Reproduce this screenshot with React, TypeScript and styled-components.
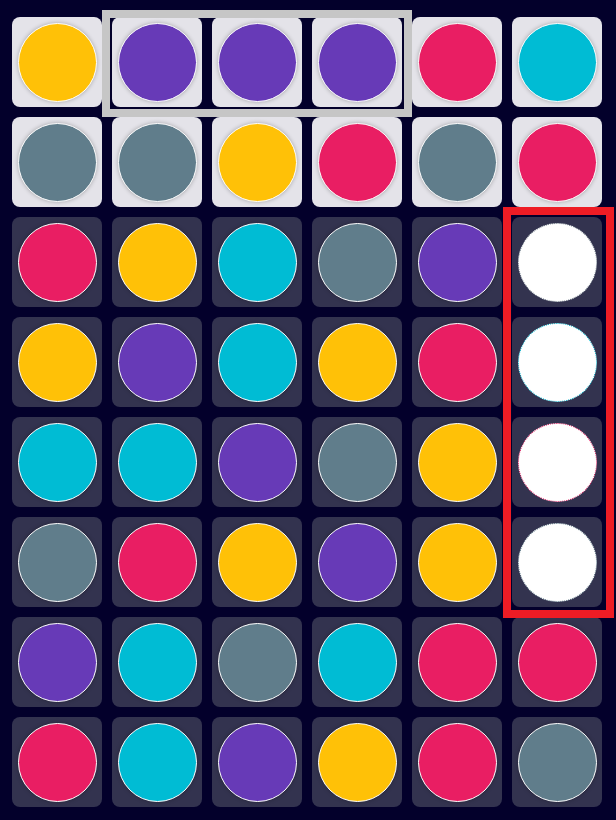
import React from "react";
import styled, { createGlobalStyle } from "styled-components";

const GlobalStyle = createGlobalStyle`
  html, body {
    margin: 0;
    padding: 0;
    background: #03002b;
    font-family: "Liberation Sans", Arial, sans-serif;
  }
`;

const Page = styled.div`
  width: 616px;
  height: 820px;
  padding: 17px 0 0 12px;
  box-sizing: border-box;
  background: #03002b;
  overflow: hidden;
`;

const Board = styled.div`
  position: relative;
  display: grid;
  grid-template-columns: repeat(6, 90px);
  grid-auto-rows: 90px;
  gap: 10px;
  width: max-content;
`;

const Cell = styled.div<{ $light: boolean }>`
  border-radius: 8px;
  background: ${(p) => (p.$light ? "#e4e3e9" : "#33334f")};
  display: flex;
  align-items: center;
  justify-content: center;
`;

const Peg = styled.div<{ $color: string }>`
  width: 79px;
  height: 79px;
  box-sizing: border-box;
  border-radius: 50%;
  background: ${(p) => p.$color};
  border: 1px solid #ffffff;
  box-shadow: 0 0 4px rgba(0, 0, 0, 0.28);
`;

const EmptyPeg = styled.div<{ $ring: string }>`
  width: 79px;
  height: 79px;
  box-sizing: border-box;
  border-radius: 50%;
  background: #ffffff;
  border: 1px dotted ${(p) => p.$ring};
`;

const Highlight = styled.div<{ $color: string }>`
  position: absolute;
  box-sizing: border-box;
  border: 8px solid ${(p) => p.$color};
  pointer-events: none;
`;

const Y = "#FFC107";
const P = "#673AB7";
const C = "#00BCD4";
const G = "#607D8B";
const K = "#E91E63";

type Slot = { color?: string; ring?: string };

const rows: Slot[][] = [
  [Y, P, P, P, K, C].map((c) => ({ color: c })),
  [G, G, Y, K, G, K].map((c) => ({ color: c })),
  [...[K, Y, C, G, P].map((c) => ({ color: c })), { ring: "#7f8c96" }],
  [...[Y, P, C, Y, K].map((c) => ({ color: c })), { ring: C }],
  [...[C, C, P, G, Y].map((c) => ({ color: c })), { ring: K }],
  [...[G, K, Y, P, Y].map((c) => ({ color: c })), { ring: G }],
  [P, C, G, C, K, K].map((c) => ({ color: c })),
  [K, C, P, Y, K, G].map((c) => ({ color: c })),
];

export default function App() {
  return (
    <>
      <GlobalStyle />
      <Page>
        <Board>
          {rows.map((row, r) =>
            row.map((slot, c) => (
              <Cell key={`${r}-${c}`} $light={r < 2}>
                {slot.color ? (
                  <Peg $color={slot.color} />
                ) : (
                  <EmptyPeg $ring={slot.ring || "#999"} />
                )}
              </Cell>
            ))
          )}
          <Highlight
            $color="#c6c6c6"
            style={{ left: 90, top: -7, width: 310, height: 107 }}
          />
          <Highlight
            $color="#ee1c25"
            style={{ left: 491, top: 190, width: 111, height: 411 }}
          />
        </Board>
      </Page>
    </>
  );
}
